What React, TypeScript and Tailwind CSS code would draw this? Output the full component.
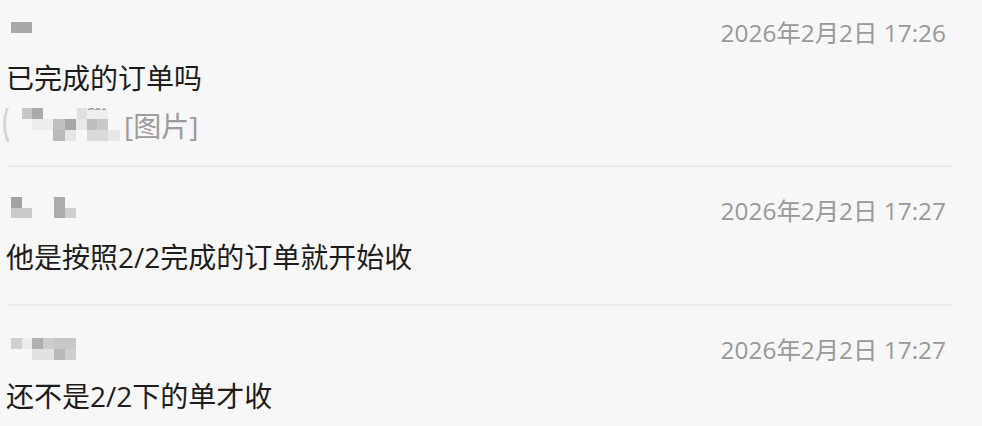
type Cell = [number, number, number, number, string];

const Mosaic = ({ w, h, cells, children }: { w: number; h: number; cells: Cell[]; children?: React.ReactNode }) => (
  <svg width={w} height={h} viewBox={`0 0 ${w} ${h}`} className="shrink-0">
    {children}
    {cells.map(([x, y, cw, ch, c], i) => (
      <rect key={i} x={x} y={y} width={cw} height={ch} fill={c} />
    ))}
  </svg>
);

const names: Cell[][] = [
  [[3, 4, 21, 11, "#a9a9a9"]],
  [
    [3, 1, 11, 11, "#a2a2a2"],
    [3, 12, 21, 10, "#c9c9c9"],
    [46, 1, 11, 21, "#acacac"],
    [57, 12, 11, 10, "#cfcfcf"],
  ],
  [
    [3, 3, 11, 11, "#d0d0d0"],
    [14, 3, 10, 11, "#ececec"],
    [24, 3, 11, 11, "#b0b0b0"],
    [35, 3, 11, 11, "#cdcdcd"],
    [46, 3, 22, 11, "#c8c8c8"],
    [24, 14, 22, 11, "#e2e2e2"],
    [46, 14, 11, 11, "#b9b9b9"],
    [57, 14, 11, 11, "#d0d0d0"],
  ],
];

const photo: Cell[] = [
  [22, 0, 10, 11, "#c6c6c6"],
  [32, 0, 11, 11, "#aaaaaa"],
  [77, 0, 10, 11, "#e0e0e0"],
  [87, 2, 21, 9, "#eeeeee"],
  [32, 11, 21, 11, "#ededed"],
  [53, 11, 12, 11, "#c0c0c0"],
  [65, 11, 11, 11, "#a7a7a7"],
  [76, 11, 11, 11, "#e8e8e8"],
  [87, 11, 10, 11, "#bdbdbd"],
  [97, 11, 11, 11, "#c9c9c9"],
  [53, 22, 12, 11, "#b9b9b9"],
  [65, 22, 11, 11, "#e6e6e6"],
  [87, 22, 21, 11, "#dadada"],
  [108, 22, 12, 11, "#e8e8e8"],
];

const Divider = () => <div className="ml-2 h-[2px] w-[945px] bg-[#ebebeb]" />;

const Header = ({ name, time }: { name: Cell[]; time: string }) => (
  <div className="flex h-[30px] items-center justify-between pl-2 pr-[36px]">
    <Mosaic w={70} h={30} cells={name} />
    <span className="text-[24.4px] leading-[30px] text-[#999999]">{time}</span>
  </div>
);

const Message = ({ text }: { text: string }) => (
  <p className="pl-[6px] text-[28px] leading-[40px] text-[#1c1c1c]">{text}</p>
);

export default function App() {
  return (
    <div
      className="h-[426px] w-[982px] overflow-hidden bg-[#f7f7f7]"
      style={{ fontFamily: '"Open Sans", "Noto Sans CJK SC", sans-serif' }}
    >
      <section className="pt-[18px] pb-[21px]">
        <Header name={names[0]} time="2026年2月2日 17:26" />
        <div className="mt-[10px]">
          <Message text="已完成的订单吗" />
        </div>
        <div className="mt-[10px] flex h-[36px] items-start">
          <Mosaic w={120} h={36} cells={photo}>
            <path d="M8 -2 Q1 16 8 34" stroke="#d6d6d6" strokeWidth={3} fill="none" />
            <path d="M88 2 L92 0 L95 3 L98 0 L101 3 L104 1 L107 3" stroke="#9a9a9a" strokeWidth={1.5} fill="none" />
          </Mosaic>
          <span className="ml-[4px] -mt-[2px] text-[28px] leading-[40px] text-[#9b9b9b]">[图片]</span>
        </div>
      </section>
      <Divider />
      <section className="pt-[29px] pb-[27px]">
        <Header name={names[1]} time="2026年2月2日 17:27" />
        <div className="mt-[11px]">
          <Message text="他是按照2/2完成的订单就开始收" />
        </div>
      </section>
      <Divider />
      <section className="pt-[29px]">
        <Header name={names[2]} time="2026年2月2日 17:27" />
        <div className="mt-[11px]">
          <Message text="还不是2/2下的单才收" />
        </div>
      </section>
    </div>
  );
}
